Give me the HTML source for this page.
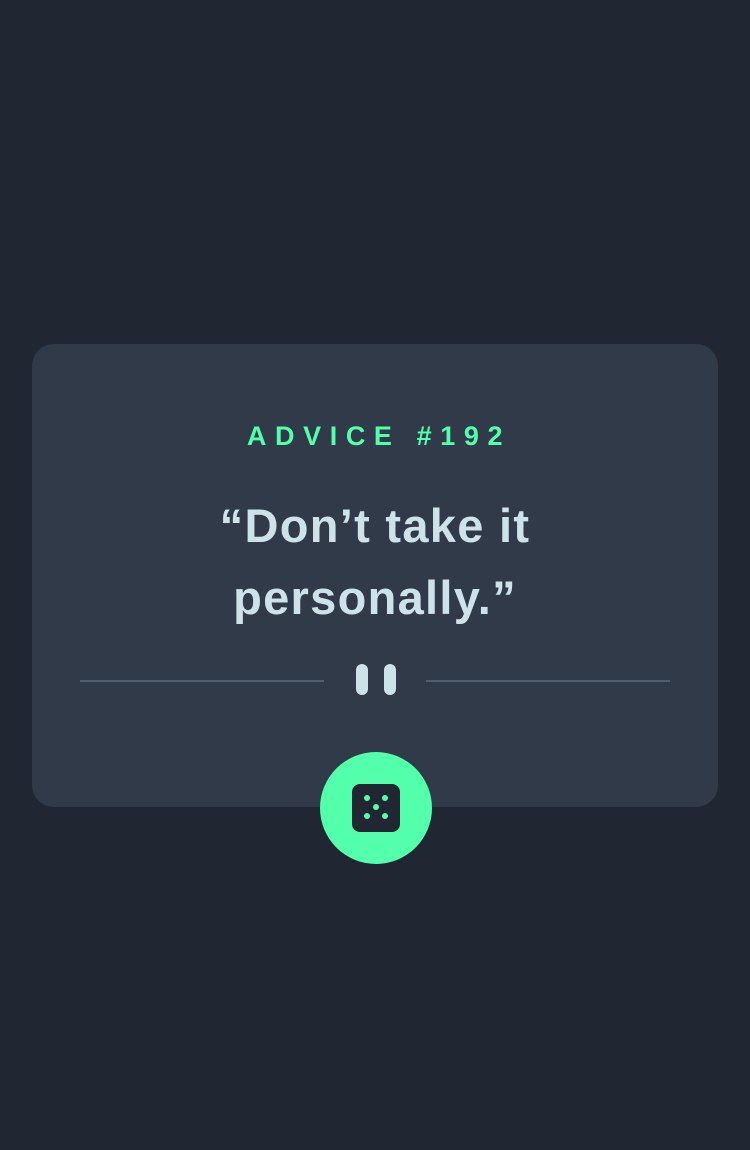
<!DOCTYPE html>
<html><head><style>
html,body{margin:0;padding:0;width:750px;height:1150px;background:#202733;overflow:hidden}
.card{position:absolute;left:32px;top:344px;width:686px;height:463px;background:#313a48;border-radius:22px}
.t{position:absolute;left:0;width:750px;top:421px;text-align:center;font:700 27px "Liberation Sans",sans-serif;letter-spacing:8.6px;color:#53ffaa;padding-left:8px;box-sizing:border-box}
.q{position:absolute;left:0;width:750px;top:490px;text-align:center;font:700 47px/72px "Liberation Sans",sans-serif;color:#cee3e9;letter-spacing:1.3px}
.l{position:absolute;top:680px;height:2px;width:244px;background:#4f5d74}
.b{position:absolute;top:664px;width:12px;height:31px;border-radius:6px;background:#cee3e9}
.btn{position:absolute;left:320px;top:752px;width:112px;height:112px;border-radius:50%;background:#53ffaa}
</style></head><body>
<div class="card"></div>
<div class="t">ADVICE #192</div>
<div class="q">“Don’t take it<br>personally.”</div>
<div class="l" style="left:80px"></div><div class="l" style="left:426px"></div>
<div class="b" style="left:356px"></div><div class="b" style="left:384px"></div>
<div class="btn"></div>
<svg style="position:absolute;left:352px;top:784px" width="48" height="48"><rect width="48" height="48" rx="8" fill="#202733"/><g fill="#53ffaa"><circle cx="15" cy="14" r="3"/><circle cx="33" cy="14" r="3"/><circle cx="24" cy="23" r="3"/><circle cx="15" cy="32" r="3"/><circle cx="33" cy="32" r="3"/></g></svg>
</body></html>
